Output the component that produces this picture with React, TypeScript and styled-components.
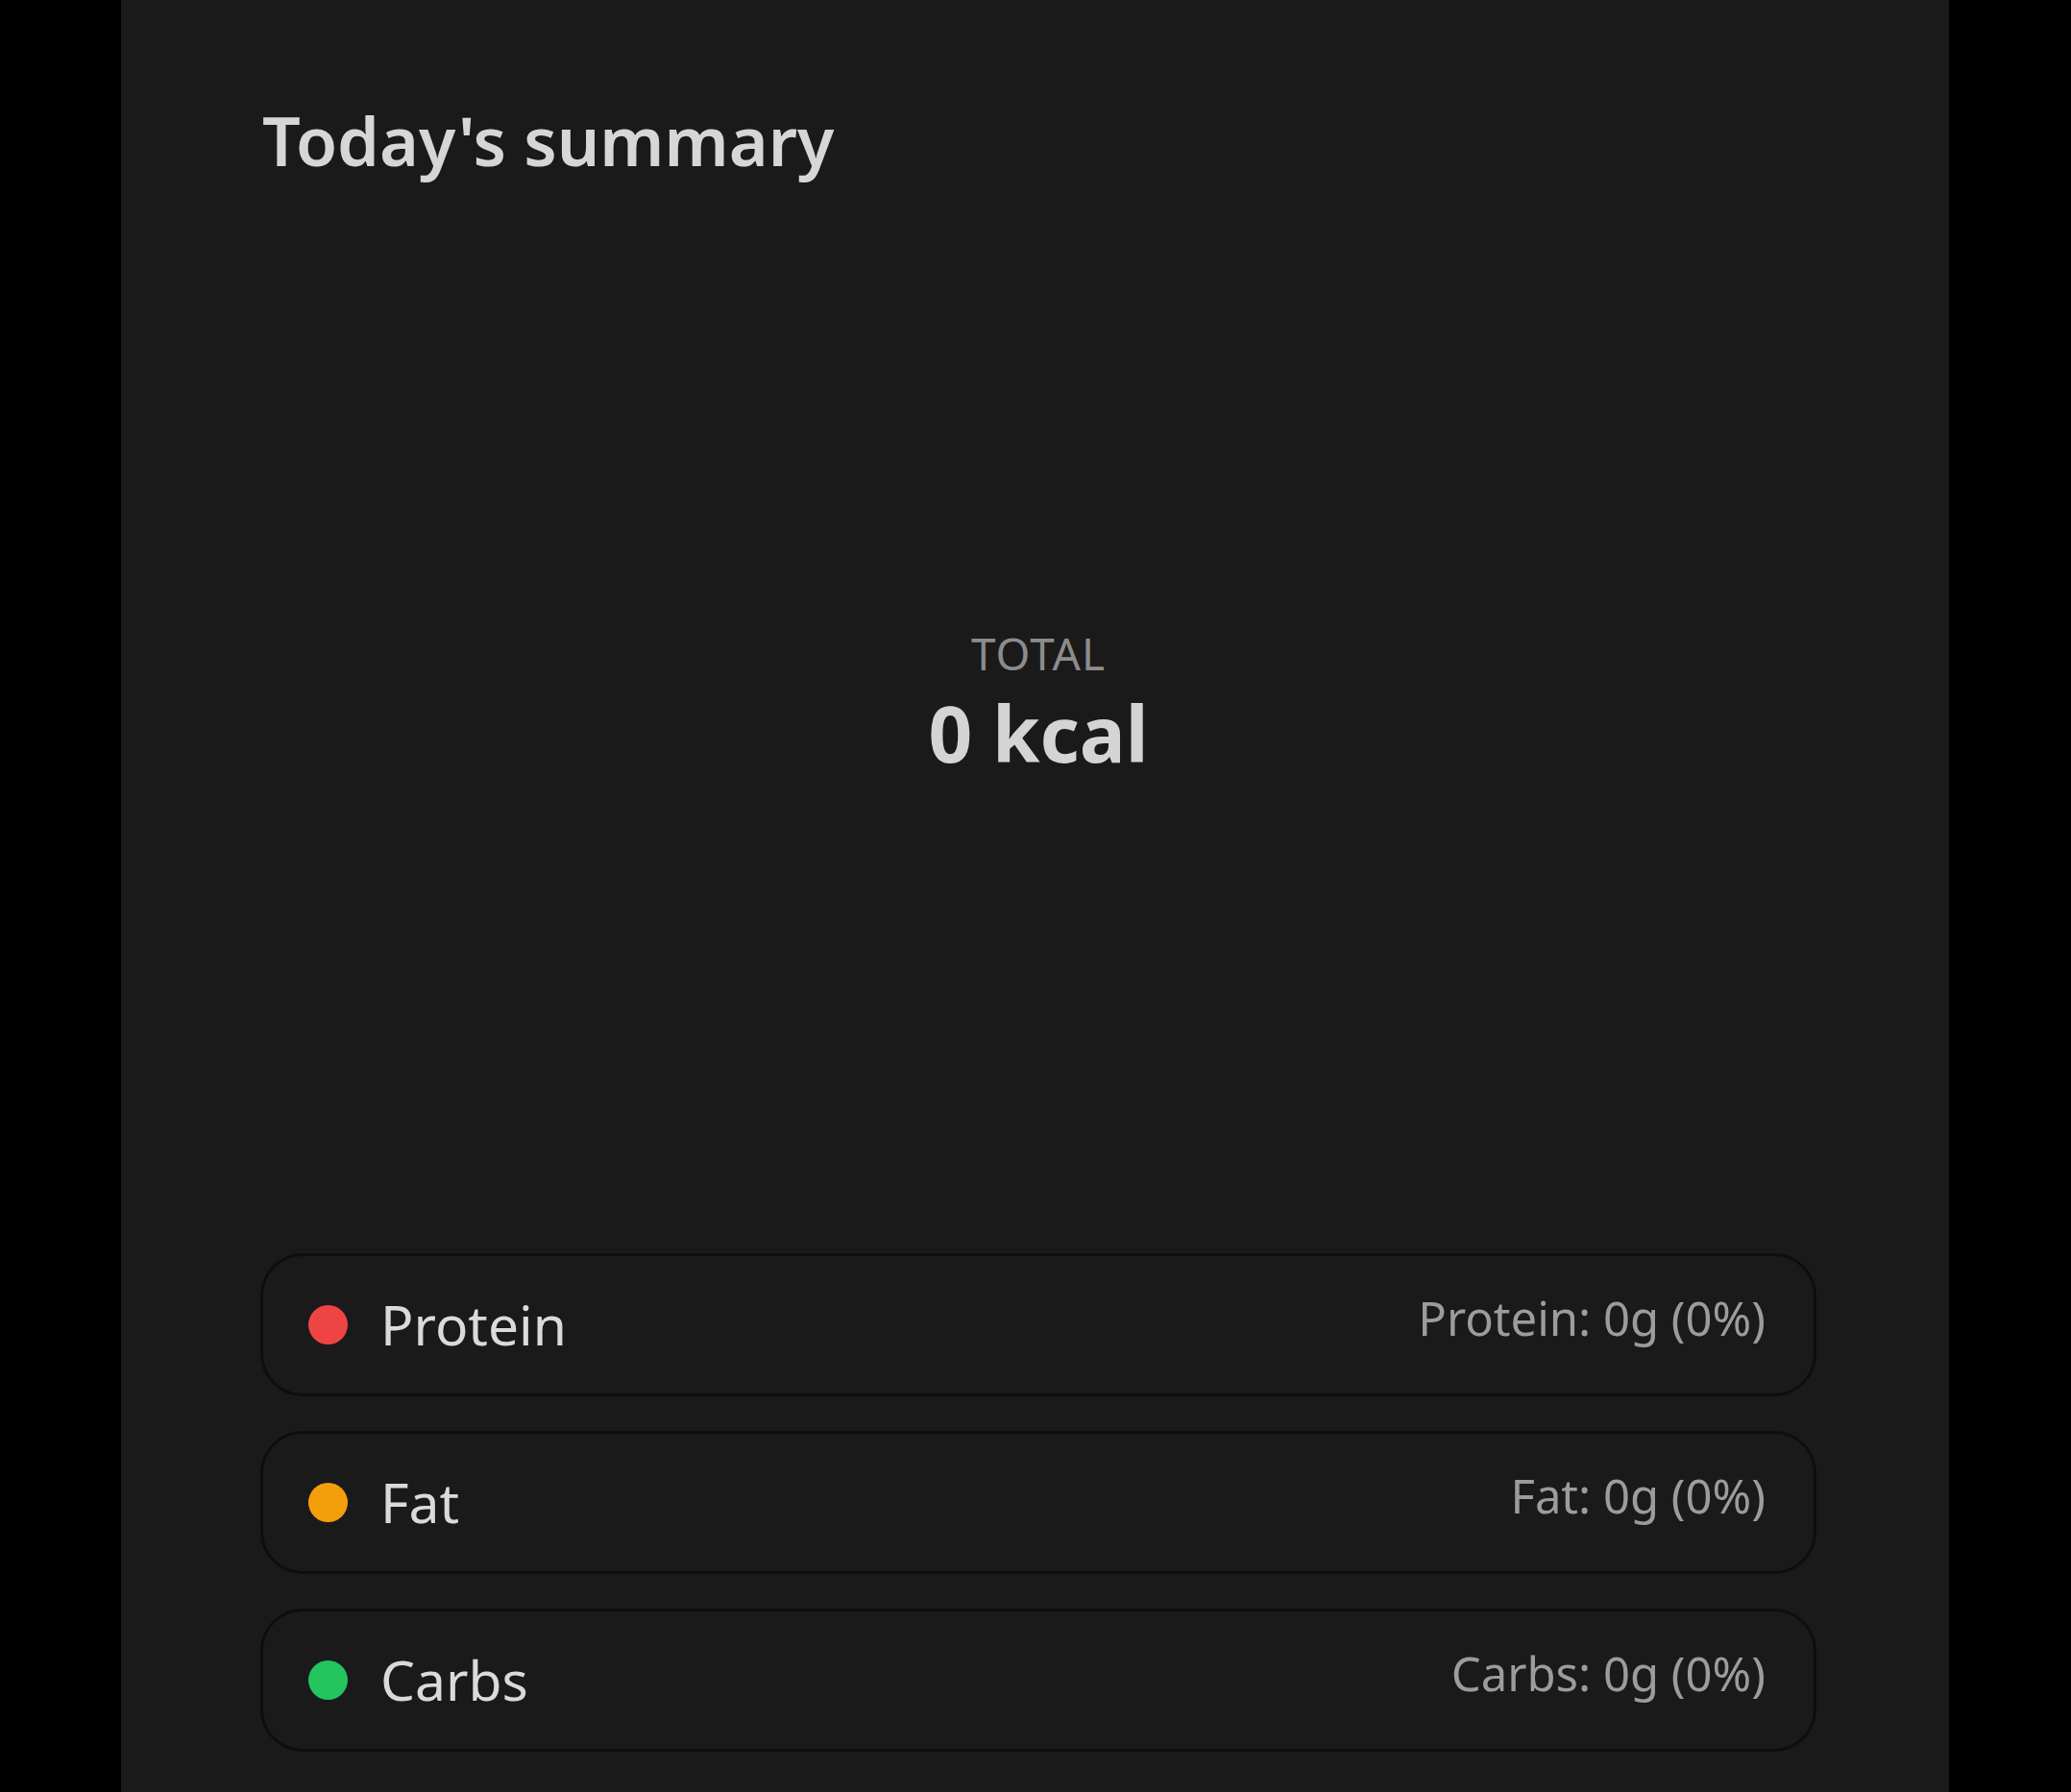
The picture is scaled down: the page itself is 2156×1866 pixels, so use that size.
import React from "react";
import styled, { createGlobalStyle } from "styled-components";

const GlobalStyle = createGlobalStyle`
  html, body {
    margin: 0;
    padding: 0;
    background: #000;
  }
  body {
    font-family: "Noto Sans", "Open Sans", sans-serif;
  }
`;

type Macro = {
  name: string;
  color: string;
  grams: number;
  percent: number;
};

const macros: Macro[] = [
  { name: "Protein", color: "#ef4444", grams: 0, percent: 0 },
  { name: "Fat", color: "#f59e0b", grams: 0, percent: 0 },
  { name: "Carbs", color: "#22c55e", grams: 0, percent: 0 },
];

const App = () => {
  return (
    <>
      <GlobalStyle />
      <Page>
        <Panel>
          <Title>Today's summary</Title>
          <Chart>
            <TotalLabel>TOTAL</TotalLabel>
            <TotalValue>0 kcal</TotalValue>
          </Chart>
          <Legend>
            {macros.map((m) => (
              <Row key={m.name}>
                <RowLeft>
                  <Dot $color={m.color} />
                  <Label>{m.name}</Label>
                </RowLeft>
                <Value>
                  {m.name}: {m.grams}g ({m.percent}%)
                </Value>
              </Row>
            ))}
          </Legend>
        </Panel>
      </Page>
    </>
  );
};

export default App;

const Page = styled.div`
  min-height: 1866px;
  background: #000;
  display: flex;
`;

const Panel = styled.div`
  margin-left: 126px;
  width: 1903px;
  min-height: 1866px;
  box-sizing: border-box;
  background: #1a1a1a;
  padding: 104px 138px 0 145px;
  display: flex;
  flex-direction: column;
`;

const Title = styled.h1`
  margin: 0;
  padding-left: 2px;
  font-size: 70px;
  line-height: 1.2;
  font-weight: 600;
  color: #d6d6d6;
`;

const Chart = styled.div`
  height: 1072px;
  box-sizing: border-box;
  padding-top: 16px;
  display: flex;
  flex-direction: column;
  align-items: center;
  justify-content: center;
  gap: 6px;
`;

const TotalLabel = styled.div`
  font-size: 46px;
  line-height: 1.2;
  letter-spacing: 1px;
  color: #8c8c8c;
`;

const TotalValue = styled.div`
  font-size: 80px;
  line-height: 1.2;
  font-weight: 700;
  color: #d4d4d4;
`;

const Legend = styled.div`
  margin-top: 45px;
  display: flex;
  flex-direction: column;
  gap: 36px;
`;

const Row = styled.div`
  height: 149px;
  box-sizing: border-box;
  border: 3px solid #0e0e0e;
  border-radius: 44px;
  padding: 0 50px 0 47px;
  display: flex;
  align-items: center;
  justify-content: space-between;
`;

const RowLeft = styled.div`
  display: flex;
  align-items: center;
  gap: 34px;
`;

const Dot = styled.span<{ $color: string }>`
  width: 41px;
  height: 41px;
  border-radius: 50%;
  background: ${(p) => p.$color};
  flex-shrink: 0;
`;

const Label = styled.span`
  font-size: 57px;
  line-height: 1.2;
  color: #dadada;
`;

const Value = styled.span`
  font-size: 49px;
  line-height: 1.2;
  color: #9c9c9c;
  margin-bottom: 14px;
`;
